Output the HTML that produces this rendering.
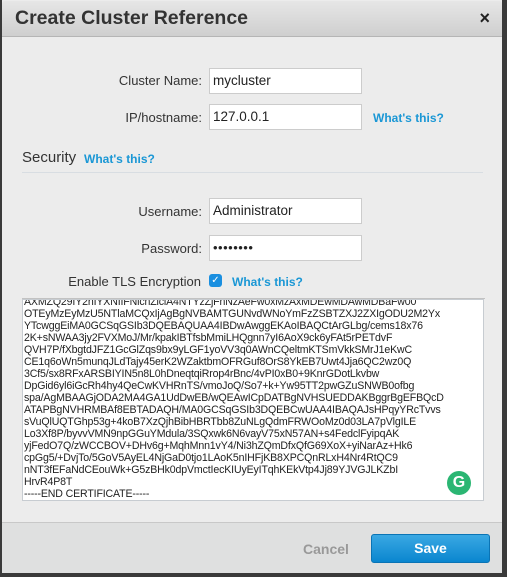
<!DOCTYPE html>
<html><head><style>
body{margin:0;width:507px;height:577px;background:#3a3a3a;font-family:"Liberation Sans",sans-serif;overflow:hidden;position:relative}
.dlg{position:absolute;left:2px;top:0;width:500px;height:572px;background:#ececec;}
.hdr{position:absolute;left:0;top:1px;width:500px;height:35px;background:linear-gradient(#e6e6e6,#cfcfcf);border-bottom:1px solid #b5b5b5;border-radius:3px 3px 0 0}
.hdr h1{margin:0;position:absolute;left:13px;top:6px;font-size:19.5px;font-weight:bold;color:#333}
.x{position:absolute;right:12px;top:7px;font-size:18px;font-weight:bold;color:#222}
.lbl{position:absolute;font-size:13px;color:#333;text-align:right;width:200px;left:0}
.inp{position:absolute;left:207px;background:#fff;border:1px solid #ccc;font-size:13.5px;color:#222;line-height:24px;padding-left:3px;box-sizing:border-box;width:153px;height:26px}
.lnk{position:absolute;color:#1a97d5;font-size:12px;font-weight:bold}
.ta{position:absolute;left:20px;top:299px;width:462px;height:202px;background:#fff;border:1px solid #c7ccd1;box-sizing:border-box;overflow:hidden}
.ta pre{margin:0;position:absolute;left:1px;top:-4px;font-family:"Liberation Sans",sans-serif;font-size:10.6px;line-height:12px;color:#222;letter-spacing:-0.15px}
.foot{position:absolute;left:0;top:522px;width:500px;height:50px;background:#dfe0e0;border-top:1px solid #c8c8c8}
.save{position:absolute;left:369px;top:11px;width:119px;height:29px;border-radius:3px;background:linear-gradient(#3aa8e3,#0a86cf);border:1px solid #0a74b5;box-sizing:border-box;color:#fff;font-weight:bold;font-size:14px;text-align:center;line-height:27px}
</style></head><body>
<div class="dlg">
<div class="hdr"><h1>Create Cluster Reference</h1><div class="x">×</div></div>
<div class="lbl" style="top:73px">Cluster Name:</div>
<div class="inp" style="top:68px">mycluster</div>
<div class="lbl" style="top:110px">IP/hostname:</div>
<div class="inp" style="top:104px">127.0.0.1</div>
<div class="lnk" style="left:371px;top:111px">What's this?</div>
<div style="position:absolute;left:20px;top:149px;font-size:15px;color:#333">Security</div>
<div class="lnk" style="left:82px;top:152px">What's this?</div>
<div style="position:absolute;left:20px;top:172px;width:461px;height:1px;background:#d8dde2"></div>
<div class="lbl" style="top:204px">Username:</div>
<div class="inp" style="top:198px">Administrator</div>
<div class="lbl" style="top:241px">Password:</div>
<div class="inp" style="top:235px;font-size:13px;letter-spacing:0.5px">••••••••</div>
<div class="lbl" style="top:274px;width:199px">Enable TLS Encryption</div>
<div style="position:absolute;left:207px;top:274px;width:13px;height:13px;background:#1a8fe0;border-radius:3px;color:#fff;font-size:10px;line-height:13px;text-align:center">✓</div>
<div class="lnk" style="left:230px;top:275px">What's this?</div>
<div style="position:absolute;left:20px;top:298px;width:463px;height:1px;background:#c2c2c2"></div>
<div class="ta"><pre>AXMZQ29IY2hIYXNIIFNlcnZlciA4NTYzZjFhNzAeFw0xMzAxMDEwMDAwMDBaFw00
OTEyMzEyMzU5NTlaMCQxIjAgBgNVBAMTGUNvdWNoYmFzZSBTZXJ2ZXIgODU2M2Yx
YTcwggEiMA0GCSqGSIb3DQEBAQUAA4IBDwAwggEKAoIBAQCtArGLbg/cems18x76
2K+sNWAA3jy2FVXMoJ/Mr/kpakIBTfsbMmiLHQgnn7yI6AoX9ck6yFAt5rPETdvF
QVH7P/fXbgtdJFZ1GcGlZqs9bx9yLGF1yoVV3q0AWnCQeltmKTSmVkkSMrJ1eKwC
CE1q6oWn5munqJLdTajy45erK2WZaktbmOFRGuf8OrS8YkEB7Uwt4Jja6QC2wz0Q
3Cf5/sx8RFxARSBIYIN5n8L0hDneqtqiRrop4rBnc/4vPI0xB0+9KnrGDotLkvbw
DpGid6yl6iGcRh4hy4QeCwKVHRnTS/vmoJoQ/So7+k+Yw95TT2pwGZuSNWB0ofbg
spa/AgMBAAGjODA2MA4GA1UdDwEB/wQEAwICpDATBgNVHSUEDDAKBggrBgEFBQcD
ATAPBgNVHRMBAf8EBTADAQH/MA0GCSqGSIb3DQEBCwUAA4IBAQAJsHPqyYRcTvvs
sVuQlUQTGhp53g+4koB7XzQjhBibHBRTbb8ZuNLgQdmFRWOoMz0d03LA7pVlgILE
Lo3Xf8P/byvvVMN9npGGuYMdula/3SQxwk6N6vayV75xN57AN+s4FedclFyipqAK
yjFedO7Q/zWCCBOV+DHv6g+MqhMnn1vY4/Ni3hZQmDfxQfG69XoX+yiNarAz+Hk6
cpGg5/+DvjTo/5GoV5AyEL4NjGaD0tjo1LAoK5nIHFjKB8XPCQnRLxH4Nr4RtQC9
nNT3fEFaNdCEouWk+G5zBHk0dpVmctIecKIUyEyITqhKEkVtp4Jj89YJVGJLKZbI
HrvR4P8T
-----END CERTIFICATE-----</pre>
<div style="position:absolute;left:424px;top:171px;width:24px;height:24px;border-radius:50%;background:#2bb673;color:#fff;font-weight:bold;font-size:16px;text-align:center;line-height:24px">G</div>
</div>
<div class="foot">
<div style="position:absolute;left:301px;top:18px;font-size:14px;font-weight:bold;color:#999">Cancel</div>
<div class="save">Save</div>
</div>
</div>
</body></html>
